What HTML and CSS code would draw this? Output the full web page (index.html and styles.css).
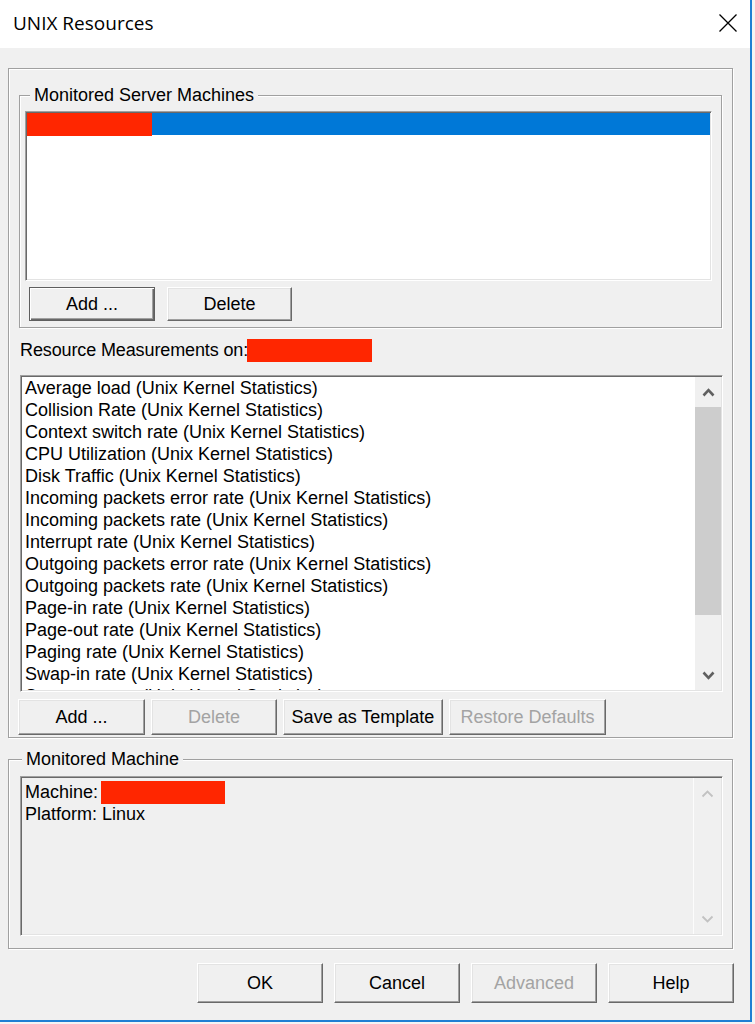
FILE: index.html
```html
<!DOCTYPE html>
<html>
<head>
<meta charset="utf-8">
<title>UNIX Resources</title>
<link rel="stylesheet" href="styles.css">
</head>
<body>
<div class="window">
  <div class="titlebar">
    <span class="title">UNIX Resources</span>
    <span class="close"><svg width="18" height="18" viewBox="0 0 18 18"><path d="M0.5 0.5 L17.5 17.5 M17.5 0.5 L0.5 17.5" stroke="#000" stroke-width="1.3" fill="none"/></svg></span>
  </div>
  <div class="client">
    <div class="group outer">
      <fieldset class="etched servers">
        <legend>Monitored Server Machines</legend>
        <div class="listbox servers-list">
          <div class="row selected"><span class="redact redact-row"></span></div>
        </div>
        <div class="btnrow row1">
          <button class="btn default w-add1">Add ...</button>
          <button class="btn w-del1">Delete</button>
        </div>
      </fieldset>
      <div class="measure-label"><span class="label-text">Resource Measurements on:</span><span class="redact redact-label"></span></div>
      <div class="listbox measures">
        <ul class="items">
          <li>Average load (Unix Kernel Statistics)</li>
          <li>Collision Rate (Unix Kernel Statistics)</li>
          <li>Context switch rate (Unix Kernel Statistics)</li>
          <li>CPU Utilization (Unix Kernel Statistics)</li>
          <li>Disk Traffic (Unix Kernel Statistics)</li>
          <li>Incoming packets error rate (Unix Kernel Statistics)</li>
          <li>Incoming packets rate (Unix Kernel Statistics)</li>
          <li>Interrupt rate (Unix Kernel Statistics)</li>
          <li>Outgoing packets error rate (Unix Kernel Statistics)</li>
          <li>Outgoing packets rate (Unix Kernel Statistics)</li>
          <li>Page-in rate (Unix Kernel Statistics)</li>
          <li>Page-out rate (Unix Kernel Statistics)</li>
          <li>Paging rate (Unix Kernel Statistics)</li>
          <li>Swap-in rate (Unix Kernel Statistics)</li>
          <li>Swap-out rate (Unix Kernel Statistics)</li>
        </ul>
        <div class="vscroll">
          <div class="sbtn"><svg width="13" height="9" viewBox="0 0 13 9"><polyline points="1.5,7.5 6.5,2.2 11.5,7.5" fill="none" stroke="#606060" stroke-width="2.6"/></svg></div>
          <div class="thumb"></div>
          <div class="track"></div>
          <div class="sbtn"><svg width="13" height="9" viewBox="0 0 13 9"><polyline points="1.5,1.5 6.5,6.8 11.5,1.5" fill="none" stroke="#606060" stroke-width="2.6"/></svg></div>
        </div>
      </div>
      <div class="btnrow row2">
        <button class="btn w-add2">Add ...</button>
        <button class="btn disabled w-del2">Delete</button>
        <button class="btn w-save">Save as Template</button>
        <button class="btn disabled w-restore">Restore Defaults</button>
      </div>
    </div>
    <fieldset class="etched machine">
      <legend>Monitored Machine</legend>
      <div class="textbox">
        <div class="text">
          <div class="line"><span>Machine:</span><span class="redact redact-machine"></span></div>
          <div class="line">Platform: Linux</div>
        </div>
        <div class="vscroll off">
          <div class="sbtn"><svg width="13" height="9" viewBox="0 0 13 9"><polyline points="1.5,7.5 6.5,2.5 11.5,7.5" fill="none" stroke="#c2c2c2" stroke-width="1.8"/></svg></div>
          <div class="track"></div>
          <div class="sbtn"><svg width="13" height="9" viewBox="0 0 13 9"><polyline points="1.5,1.5 6.5,6.5 11.5,1.5" fill="none" stroke="#c2c2c2" stroke-width="1.8"/></svg></div>
        </div>
      </div>
    </fieldset>
    <div class="dlgbuttons">
      <button class="btn w-dlg">OK</button>
      <button class="btn w-dlg">Cancel</button>
      <button class="btn disabled w-dlg">Advanced</button>
      <button class="btn w-dlg">Help</button>
    </div>
  </div>
</div>
</body>
</html>
```

FILE: styles.css
```css
* { box-sizing: border-box; }
html, body { margin: 0; padding: 0; }
body {
  background: #f4f4f4;
  width: 755px;
  height: 1024px;
  overflow: hidden;
  font-family: "Liberation Sans", Arial, sans-serif;
  font-size: 18px;
  color: #000;
}
.window {
  width: 752px;
  height: 1022px;
  border-right: 2px solid #1f7fd3;
  border-bottom: 2px solid #1f7fd3;
  background: #f0f0f0;
  display: flex;
  flex-direction: column;
}
.titlebar {
  flex: none;
  height: 48px;
  background: #fff;
  display: flex;
  align-items: center;
  justify-content: space-between;
  padding: 0 13px 2px 13px;
}
.title {
  font-family: "Open Sans", "Noto Sans", sans-serif;
  font-size: 19px;
  color: #000;
}
.close { display: flex; width: 18px; height: 18px; }

.client {
  flex: 1;
  display: flex;
  flex-direction: column;
  padding: 20px 16px 17px 8px;
}

.group.outer {
  flex: none;
  margin-right: 1px;
  border: 1px solid #a0a0a0;
  box-shadow: inset 1px 1px 0 #fff, 1px 1px 0 #fff;
  padding: 16px 10px 2px 10px;
  display: flex;
  flex-direction: column;
  align-items: flex-start;
}

fieldset.etched {
  margin: 0;
  min-width: 0;
  border: 1px solid #a0a0a0;
  box-shadow: inset 1px 1px 0 #fff, 1px 1px 0 #fff;
}
fieldset.etched legend {
  background: #f0f0f0;
  font-size: 18px;
  line-height: 20px;
  padding: 0 4px;
}

fieldset.servers {
  width: 703px;
  padding: 6px 9px 6px 5px;
}
fieldset.servers legend { margin-left: 5px; }

.listbox {
  background: #fff;
  border: 1px solid;
  border-color: #a0a0a0 #fff #fff #a0a0a0;
  box-shadow: inset 1px 1px 0 #696969, inset -1px -1px 0 #e3e3e3;
  padding: 1px;
}
.servers-list { width: 687px; height: 170px; }
.row { height: 22px; }
.row.selected { background: #0078d7; }
.redact { display: block; background: #ff2600; }
.redact-row { width: 125px; height: 23px; }

.btnrow { display: flex; }
.row1 { margin-top: 6px; gap: 12px; padding-left: 4px; }
.row2 { margin-top: 7px; gap: 6px; margin-left: -1px; }

.btn {
  font-family: inherit;
  font-size: 18px;
  color: #000;
  background: #f0f0f0;
  border: 1px solid;
  border-color: #fff #696969 #696969 #fff;
  box-shadow: inset -1px -1px 0 #a0a0a0, inset 1px 1px 0 #e3e3e3;
  padding: 0;
  margin: 0;
  display: flex;
  align-items: center;
  justify-content: center;
  flex: none;
}
.btn.default {
  border-color: #5f5f5f;
  box-shadow: inset 1px 1px 0 #fff, inset -1px -1px 0 #696969, inset -2px -2px 0 #a0a0a0;
}
.btn.disabled { color: #a3a3a3; }
.w-add1 { width: 126px; height: 34px; }
.w-del1 { width: 125px; height: 34px; }
.w-add2 { width: 127px; height: 36px; }
.w-del2 { width: 126px; height: 36px; }
.w-save { width: 160px; height: 36px; }
.w-restore { width: 157px; height: 36px; }
.w-dlg { width: 126px; height: 40px; }

.measure-label {
  margin: 11px 0 14px 1px;
  height: 22px;
  display: flex;
  align-items: center;
}
.label-text { letter-spacing: -0.12px; }
.redact-label { width: 125px; height: 23px; margin-left: -1px; }

.measures {
  width: 703px;
  height: 317px;
  margin-left: 1px;
  display: flex;
}
.items {
  flex: 1;
  margin: 0;
  padding: 0 0 0 3px;
  list-style: none;
  overflow: hidden;
  line-height: 22px;
  white-space: nowrap;
}
.vscroll {
  flex: none;
  width: 26px;
  background: #f0f0f0;
  display: flex;
  flex-direction: column;
}
.sbtn {
  height: 30px;
  flex: none;
  display: flex;
  align-items: center;
  justify-content: center;
}
.thumb { height: 208px; flex: none; background: #cdcdcd; }
.track { flex: 1; }

fieldset.machine {
  flex: none;
  margin: 11px 1px 0 0;
  padding: 7px 9px 12px 11px;
}
fieldset.machine legend { margin-left: 2px; }
.textbox {
  width: 703px;
  height: 160px;
  background: #f0f0f0;
  border: 1px solid;
  border-color: #a0a0a0 #fff #fff #a0a0a0;
  box-shadow: inset 1px 1px 0 #696969, inset -1px -1px 0 #e3e3e3;
  padding: 1px;
  display: flex;
}
.textbox .text {
  flex: 1;
  padding: 3px 0 0 3px;
  line-height: 22px;
}
.line { display: flex; align-items: center; height: 22px; }
.redact-machine { width: 124px; height: 23px; margin-left: 3px; }
.vscroll.off { width: 28px; border-left: 1px solid #fcfcfc; }

.dlgbuttons {
  flex: none;
  margin-top: 14px;
  display: flex;
  justify-content: flex-end;
  gap: 11px;
}
```
